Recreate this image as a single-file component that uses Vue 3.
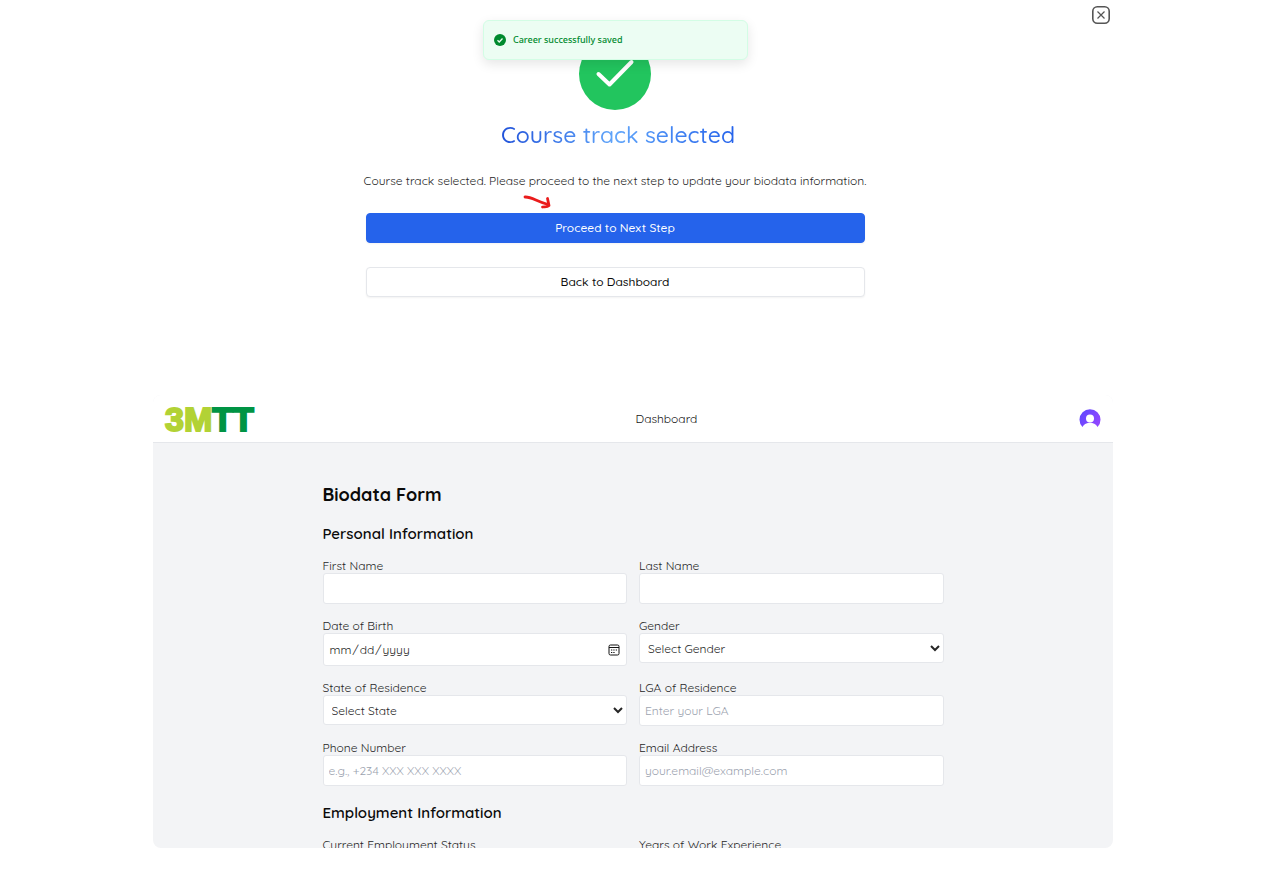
<template>
  <main class="page">
    <section class="dialog" aria-labelledby="dialog-title">
      <div class="toast" role="status">
        <svg class="toast__icon" viewBox="0 0 24 24" aria-hidden="true">
          <circle cx="12" cy="12" r="12" fill="#008a2e" />
          <path d="M7 12.5l3.5 3.5L17 9" fill="none" stroke="#ecfdf3" stroke-width="2.6" />
        </svg>
        <span>Career successfully saved</span>
      </div>
      <button class="dialog__close" type="button" aria-label="Close">
        <svg viewBox="0 0 20 20" aria-hidden="true">
          <rect x="1.8" y="1.8" width="16.4" height="16.4" rx="4.5" />
          <path class="dialog__cross" d="M6.5 6.5l7 7m0-7l-7 7" />
        </svg>
      </button>

      <svg class="dialog__badge" viewBox="0 0 72 72" aria-hidden="true">
        <circle cx="36" cy="36" r="36" fill="#22c55e" />
        <path
          d="M19.5 36L30.5 46.5L52.5 24"
          fill="none"
          stroke="#fff"
          stroke-width="4"
          stroke-linecap="round"
          stroke-linejoin="round"
        />
      </svg>
      <h1 id="dialog-title" class="dialog__title">Course track selected</h1>
      <div class="dialog__body">
        <p class="dialog__text">
          Course track selected. Please proceed to the next step to update your biodata information.
        </p>
        <svg class="dialog__arrow" viewBox="0 0 28 14" aria-hidden="true">
          <path d="M2 2C8 1.5 13 6 25 9.5M24.5 3.5L26 10.5C24 12.5 22 11.5 19.5 12" />
        </svg>
        <button class="btn btn--primary" type="button">Proceed to Next Step</button>
        <button class="btn" type="button">Back to Dashboard</button>
      </div>
    </section>

    <section class="portal">
      <header class="portal__header">
        <div class="logo">3M<span class="logo__dark">TT</span></div>
        <a class="portal__link" href="#">Dashboard</a>
        <button class="avatar" type="button" aria-label="Account">
          <svg viewBox="0 0 22 22" aria-hidden="true">
            <defs>
              <linearGradient id="avatar-fill" x1="0" y1="0" x2="1" y2="0.6">
                <stop offset="0" stop-color="#5b48ff" />
                <stop offset="1" stop-color="#9046ff" />
              </linearGradient>
            </defs>
            <path
              d="M3.5 19A10.5 10.5 0 1 1 18.5 19C17 15.8 14 14.8 11 14.8S5 15.8 3.5 19Z"
              fill="url(#avatar-fill)"
            />
            <circle cx="11" cy="10.5" r="4" fill="#fff" />
          </svg>
        </button>
      </header>

      <form class="form" @submit.prevent>
        <h2 class="form__title">Biodata Form</h2>
        <template v-for="group in groups" :key="group.title">
          <h3 class="form__subtitle">{{ group.title }}</h3>
          <div class="form__grid">
            <div v-for="field in group.fields" :key="field.id" class="field">
              <label class="field__label" :for="field.id">{{ field.label }}</label>
              <select v-if="field.type === 'select'" :id="field.id" class="field__control field__control--select">
                <option>{{ field.placeholder }}</option>
              </select>
              <input
                v-else
                :id="field.id"
                class="field__control"
                :class="{ 'field__control--date': field.type === 'date' }"
                :type="field.type"
                :placeholder="field.placeholder"
              />
            </div>
          </div>
        </template>
      </form>
    </section>
  </main>
</template>

<script setup>
const groups = [
  {
    title: "Personal Information",
    fields: [
      { id: "first-name", label: "First Name", type: "text" },
      { id: "last-name", label: "Last Name", type: "text" },
      { id: "birth-date", label: "Date of Birth", type: "date" },
      { id: "gender", label: "Gender", type: "select", placeholder: "Select Gender" },
      { id: "state", label: "State of Residence", type: "select", placeholder: "Select State" },
      { id: "lga", label: "LGA of Residence", type: "text", placeholder: "Enter your LGA" },
      { id: "phone", label: "Phone Number", type: "tel", placeholder: "e.g., +234 XXX XXX XXXX" },
      { id: "email", label: "Email Address", type: "email", placeholder: "your.email@example.com" },
    ],
  },
  {
    title: "Employment Information",
    fields: [
      { id: "employment", label: "Current Employment Status", type: "text" },
      { id: "experience", label: "Years of Work Experience", type: "text" },
    ],
  },
];
</script>

<style>
body {
  background: #fff;
}
</style>

<style scoped>
.page {
  display: flex;
  flex-direction: column;
  box-sizing: border-box;
  height: 100vh;
  padding: 0 168px 24px 153px;
  color: #0a0a0a;
  font-family: Quicksand, Lato, sans-serif;
  font-size: 12px;
  line-height: 16px;
}

button,
input,
select {
  box-sizing: border-box;
  color: inherit;
  font: inherit;
}

.dialog {
  position: relative;
  display: flex;
  flex-direction: column;
  align-items: center;
  padding: 38px 36px 98px 0;
}

.toast {
  position: absolute;
  top: 20px;
  left: 330px;
  display: flex;
  align-items: center;
  gap: 7px;
  box-sizing: border-box;
  width: 265px;
  height: 40px;
  padding: 0 10px;
  border: 1px solid #d3fde5;
  border-radius: 6px;
  background: #ecfdf3;
  box-shadow: 0 4px 12px rgba(0, 0, 0, 0.1);
  color: #008a2e;
  font-family: "Noto Sans", sans-serif;
  font-size: 9px;
  font-weight: 500;
}

.toast__icon {
  width: 12px;
  height: 12px;
}

.dialog__close {
  position: absolute;
  top: 5px;
  right: 2px;
  width: 20px;
  height: 20px;
  padding: 0;
  border: 0;
  background: none;
}

.dialog__close svg {
  display: block;
  fill: none;
  stroke: #555;
  stroke-width: 1.6;
}

.dialog__cross {
  stroke-width: 1.2;
}

.dialog__badge {
  width: 72px;
  height: 72px;
}

.dialog__title {
  margin: 9px 0 0;
  padding-left: 6px;
  background: linear-gradient(90deg, #1d4ed8, #60a5fa 50%, #2563eb);
  background-clip: text;
  color: transparent;
  font-size: 23px;
  font-weight: 500;
  line-height: 32px;
}

.dialog__body {
  display: flex;
  flex-direction: column;
  width: 100%;
  max-width: 499px;
}

.dialog__text {
  margin: 22px -8px 6px;
  color: #262626;
  text-align: center;
}

.dialog__arrow {
  width: 28px;
  height: 14px;
  margin: 0 0 4px 157px;
  fill: none;
  stroke: #ea1c1c;
  stroke-width: 2.8;
  stroke-linecap: round;
  stroke-linejoin: round;
}

.btn {
  height: 30px;
  border: 1px solid #e5e7eb;
  border-radius: 4px;
  background: #fff;
  box-shadow: 0 1px 2px rgba(0, 0, 0, 0.05);
  font-weight: 500;
}

.btn--primary {
  margin-bottom: 24px;
  border-color: #2563eb;
  background: #2563eb;
  color: #fff;
}

.portal {
  flex: 1;
  min-height: 0;
  overflow: hidden;
  border-radius: 8px;
  background: #f3f4f6;
}

.portal__header {
  display: flex;
  align-items: center;
  justify-content: space-between;
  height: 47px;
  padding: 0 12px;
  border-bottom: 1px solid #e5e7eb;
  background: #fff;
}

.logo {
  color: #b2d235;
  font-family: "Liberation Sans", Arial, sans-serif;
  font-size: 34px;
  font-weight: 700;
  line-height: 40px;
  -webkit-text-stroke: 2px currentColor;
}

.logo__dark {
  color: #009444;
}

.portal__link {
  color: #171717;
  text-decoration: none;
}

.avatar {
  width: 22px;
  height: 22px;
  padding: 0;
  border: 0;
  background: none;
}

.avatar svg {
  display: block;
}

.form {
  max-width: 621px;
  margin: 0 auto;
  padding: 40px 12px;
}

.form__title {
  margin: 0;
  font-size: 18px;
  font-weight: 700;
  line-height: 24px;
}

.form__subtitle {
  margin: 15px 0 12px;
  font-size: 15px;
  font-weight: 600;
  line-height: 24px;
}

.form__grid {
  display: grid;
  grid-template-columns: 1fr 1fr;
  gap: 14px 12px;
}

.field {
  display: flex;
  flex-direction: column;
}

.field__label {
  color: #262626;
  line-height: 15px;
}

.field__control {
  width: 100%;
  height: 31px;
  padding: 0 5px;
  border: 1px solid #e5e7eb;
  border-radius: 3px;
  background: #fff;
  color: #262626;
}

.field__control--date {
  height: 33px;
}

.field__control--date::-webkit-calendar-picker-indicator {
  width: 12px;
  height: 12px;
  margin-right: 1px;
  padding: 0;
  background: url("data:image/svg+xml,%3Csvg xmlns='http://www.w3.org/2000/svg' viewBox='0 0 12 12'%3E%3Crect x='1' y='1' width='10' height='10' rx='1.5' fill='none' stroke='%23111'/%3E%3Cpath d='M1 3.5h10M3 6h1.3M5.3 6h1.3M7.7 6H9M3 8.5h1.3M5.3 8.5h1.3' stroke='%23111' stroke-width='1.2'/%3E%3C/svg%3E") center / 12px no-repeat;
}

.field__control--select {
  height: 30px;
  padding: 0 4px;
}

.field__control::placeholder {
  color: #9ca3af;
}
</style>
